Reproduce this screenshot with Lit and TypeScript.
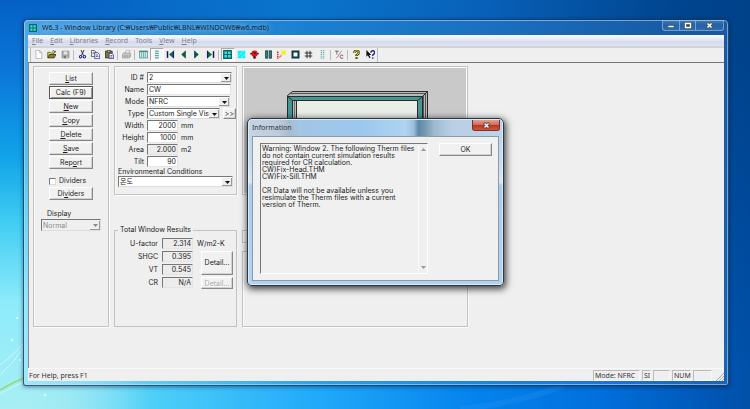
import { LitElement, html, css, svg, nothing } from "lit";
import { customElement } from "lit/decorators.js";
import { classMap } from "lit/directives/class-map.js";

const icons: Record<string, unknown> = {
  new: svg`<path d="M2.5 .5h5l3 3v8h-8z M7.5 .5v3h3" fill="#fdfdfd" stroke="#a9a9a9"/>`,
  open: svg`<path d="M1 10V3h3l1 1h4v2" fill="#e8e27a" stroke="#4a4a10"/><path d="M1 10.5l2-4.5h9l-2.500 4.500z" fill="#8a8420" stroke="#2e2e08"/><path d="M7 1.500q2-1.500 3.500 1M11 1v2H9" fill="none" stroke="#222"/>`,
  save: svg`<path d="M1.500 1.500h9v9h-9z" fill="#a5a5a5" stroke="#8b8b8b"/><path d="M3.500 2h5v4h-5z" fill="#e6e6e6"/><path d="M4 8h4v3H4z" fill="#777"/><path d="M7 8.500h1.500V11H7z" fill="#eee"/>`,
  cut: svg`<path d="M4 0l3.500 7.500M8 0L4.500 7.500" stroke="#222" stroke-width="1.200" fill="none"/><circle cx="3.500" cy="9" r="1.700" fill="none" stroke="#25259a" stroke-width="1.400"/><circle cx="8.500" cy="9" r="1.700" fill="none" stroke="#25259a" stroke-width="1.400"/>`,
  copy: svg`<path d="M.5 .5h4l2 2v6h-6z" fill="#fff" stroke="#333"/><path d="M2 3h3M2 5h3" stroke="#555"/><path d="M5 3.500h4l2.500 2.500v5.500H5z" fill="#fff" stroke="#23238a"/><path d="M6.500 6.500h3M6.500 8.500h3.500" stroke="#23238a"/>`,
  paste: svg`<path d="M.5 1.500h9v9h-9z" fill="#7d7a30" stroke="#222"/><path d="M3 .5h4v2.500H3z" fill="#d7d38a" stroke="#333"/><path d="M5.500 4.500h4l2 2v5h-6z" fill="#fff" stroke="#23238a"/><path d="M7 7.500h3M7 9.500h3" stroke="#23238a"/>`,
  print: svg`<path d="M4 4.500L5.500 .5H11L9 4.500z" fill="#f5f5f5" stroke="#aaa"/><path d="M.5 5.500l2-1.500h8.500l.5 1v3.500l-2 2H.5z" fill="#c9c9c9" stroke="#999"/><path d="M2 8h6M10 7v2" stroke="#8a8a8a"/>`,
  table: svg`<path d="M.5 1.500h11v9H.5z" fill="#d3ecea" stroke="#3f8583"/><path d="M0 2h12" stroke="#3f8583" stroke-width="1.500"/><path d="M3.500 1v9M6 1v9M8.500 1v9" stroke="#56a19d"/>`,
  list: svg`<path d="M4 1.500h5M4 4.500h5M4 7.500h5M4 10.500h5" stroke="#4fa59d" stroke-width="1.500"/>`,
  first: svg`<path d="M2 1.500v9" stroke="#141470" stroke-width="2"/><path d="M10 1v10L4 6z" fill="#0a6a3a"/><path d="M10 1v10" stroke="#1a1a80" stroke-width="1.500"/>`,
  prev: svg`<path d="M8.500 1v10L3 6z" fill="#086030"/><path d="M8.500 1v10" stroke="#1a3a60"/>`,
  next: svg`<path d="M3.500 1v10L9 6z" fill="#086030"/><path d="M3.500 1v10" stroke="#1a1a80"/>`,
  last: svg`<path d="M10 1.500v9" stroke="#141470" stroke-width="2"/><path d="M2 1v10l6-5z" fill="#0a6a3a"/><path d="M2 1v10" stroke="#1a1a80" stroke-width="1.500"/>`,
  panes: svg`<path d="M1 1h10v10H1z" fill="#3fe0dc" stroke="#0a6664" stroke-width="1.800"/><path d="M6 1v10M1 6h10" stroke="#0a6664" stroke-width="1.400"/>`,
  glass: svg`<path d="M1 1h10v10H1z" fill="#12f0f4"/><path d="M1 9l8-8M5 11l6-6" stroke="#8ffcfc"/>`,
  bulb: svg`<circle cx="6" cy="5" r="4.200" fill="#e0151b"/><path d="M0 5h3M9.500 5h2.500" stroke="#111" stroke-width="1.500"/><path d="M5 3h3v2H5z" fill="#681010"/><path d="M4.500 8.500h3v3h-3z" fill="#111"/>`,
  pause: svg`<path d="M2 1h3v10H2zM7 1h3v10H7z" fill="#2d7f7d" stroke="#123c3c"/>`,
  solar: svg`<path d="M1 2v10" stroke="#d22" stroke-width="2" stroke-dasharray="2 1"/><path d="M3 10l3-3" stroke="#e66" stroke-width="1.500"/><circle cx="9" cy="3.500" r="2.800" fill="#fbf500"/><path d="M5 0l7 8M12 0L4 7" stroke="#f7ea30" stroke-width=".8"/>`,
  frame: svg`<path d="M2 2h8v8H2z" fill="#eefafa" stroke="#0c3838" stroke-width="2.600"/>`,
  hash: svg`<path d="M4 1v10M8 1v10M1 4h10M1 8h10" stroke="#222" stroke-width="1.200"/>`,
  shade: svg`<path d="M4.500 0v12M7.500 0v12" stroke="#78b8b4" stroke-width="2" stroke-dasharray="1.500 1"/>`,
  tc: svg`<path d="M0 1.500h5M2.500 1.500V6" stroke="#444" fill="none"/><path d="M2 11L9 1" stroke="#c55"/><path d="M11 7.500q-4-2-4 1.500t4 1.500" stroke="#444" fill="none"/>`,
  help: svg`<path d="M3 4q0-3 3-3t3 2.500q0 1.800-3 3.500v1" fill="none" stroke="#3a3a08" stroke-width="3"/><path d="M3 4q0-3 3-3t3 2.500q0 1.800-3 3.500" fill="none" stroke="#e8e020" stroke-width="1.300"/><path d="M4.500 9.500h3V12h-3z" fill="#55520a"/>`,
  context: svg`<path d="M.5 0v9l2-2 2 4 1.500-1-1.700-3.500H7z" fill="#111"/><path d="M6.500 3.500q0-2.500 2.500-2.500t2.500 2.500q0 1.500-2.500 3v1.500M9 9.500v2" fill="none" stroke="#25259a" stroke-width="1.800"/>`,
};

const toolGroups: string[][] = [
  ["new", "open", "save"],
  ["cut", "copy", "paste"],
  ["print"],
  ["table", "list", "first", "prev", "next", "last"],
  ["panes", "glass", "bulb", "pause", "solar", "frame", "hash", "shade"],
  ["tc"],
  ["help", "context"],
];
const pressed = new Set(["list", "panes"]);

const menus: [string, string, string][] = [
  ["", "F", "ile"],
  ["", "E", "dit"],
  ["", "L", "ibraries"],
  ["", "R", "ecord"],
  ["Tools", "", ""],
  ["", "V", "iew"],
  ["", "H", "elp"],
];

const commands: [string, string, string][] = [
  ["", "L", "ist"],
  ["Calc (F9)", "", ""],
  ["", "N", "ew"],
  ["", "C", "opy"],
  ["", "D", "elete"],
  ["", "S", "ave"],
  ["Rep", "o", "rt"],
];

const message = `Warning: Window 2. The following Therm files
do not contain current simulation results
required for CR calculation.
CW)Fix-Head.THM
CW)Fix-Sill.THM

CR Data will not be available unless you
resimulate the Therm files with a current
version of Therm.`;

const mnemonic = ([a, b, c]: [string, string, string]) =>
  html`${a}${b ? html`<u>${b}</u>` : nothing}${c}`;

@customElement("app-root")
export class AppRoot extends LitElement {
  static styles = css`
    :host {
      --ui: "Noto Sans", "Noto Sans CJK KR", sans-serif;
      --form: "Inter", "Noto Sans CJK KR", sans-serif;
      --face: #efefef;
      display: flex;
      position: relative;
      box-sizing: border-box;
      min-height: 100vh;
      padding: 19px 21px 23px 23px;
      overflow: hidden;
      isolation: isolate;
      font: 7px/10px var(--ui);
      color: #333;
      background: linear-gradient(to right, #a5e8f0 0%, #8ce2f6 9%, #4fd0f8 20%, #22aafa 42%, #0585ee 62%, #006fdc 80%, #0055b2 96%, #0050a8 100%);
    }
    :host::before,
    :host::after {
      content: "";
      position: absolute;
      inset: 0;
      z-index: -2;
    }
    :host::before {
      background: linear-gradient(to right, #0560c4 0%, #0a74cc 40%, #0860b8 65%, #00458f 90%, #00428a 100%);
      mask-image: linear-gradient(#000 10%, transparent 90%);
    }
    :host::after {
      background: linear-gradient(#0560c4 0%, #0a76d8 17%, #10a2e8 38%, #3fcdf2 54%, #8eebfb 74%, #a8eef4 100%);
      mask-image: linear-gradient(to right, #000 3%, transparent 20%);
    }
    * { box-sizing: border-box; }
    button, input, select, textarea {
      margin: 0;
      padding: 0;
      border: 0;
      border-radius: 0;
      font: inherit;
      color: inherit;
      background: none;
      appearance: none;
      outline: none;
      min-width: 0;
    }
    svg { display: block; }
    .leaves { position: absolute; left: 0; bottom: 0; z-index: -1; }

    .window {
      flex: 1;
      min-width: 0;
      display: flex;
      flex-direction: column;
      padding: 0 4px 4px;
      border: 1px solid rgba(20, 45, 75, .75);
      border-radius: 5px 5px 3px 3px;
      background: linear-gradient(to right, rgba(150, 225, 255, .5), rgba(60, 150, 220, .35) 40%, rgba(70, 130, 200, .35));
      box-shadow: inset 0 0 0 1px rgba(190, 230, 255, .55), 0 1px 4px rgba(0, 20, 60, .5);
    }
    .title {
      display: flex;
      height: 15px;
      align-items: center;
      gap: 5px;
      padding-left: 1px;
    }
    .title h1 {
      flex: 1;
      margin: 0;
      font: 7px/12px var(--ui);
      color: #0c2238;
      white-space: nowrap;
      text-shadow: 0 0 5px rgba(170, 220, 250, .9), 0 0 8px rgba(150, 210, 250, .8);
    }
    .caption {
      align-self: flex-start;
      display: flex;
      height: 11px;
      border: 1px solid rgba(170, 200, 230, .6);
      border-top: 0;
      border-radius: 0 0 3px 3px;
    }
    .caption button {
      display: grid;
      place-items: center;
      width: 16px;
      background: linear-gradient(rgba(255, 255, 255, .2), rgba(255, 255, 255, .05) 50%, rgba(255, 255, 255, .1));
    }
    .caption button + button { border-left: 1px solid rgba(170, 200, 230, .6); }
    .caption button:last-child { width: 28px; }

    .client {
      flex: 1;
      display: flex;
      flex-direction: column;
      min-width: 0;
      background: var(--face);
    }
    .menu {
      display: flex;
      gap: 7px;
      height: 13px;
      padding: 1px 4px;
      border-bottom: 2px solid #d3d3d6;
      background: linear-gradient(#fcfcfe, #e4e7f3 45%, #d6dbed 60%, #dfe3f1);
    }
    .menu a {
      color: #808084;
      text-decoration: none;
      white-space: nowrap;
    }
    .toolbar {
      display: flex;
      align-self: flex-start;
      height: 14px;
      margin-left: 2px;
      padding-left: 1px;
      border-left: 1px solid #bbb;
      border-right: 1px solid #bbb;
      padding-bottom: 1px;
    }
    .group { display: grid; grid-auto-flow: column; grid-auto-columns: 1fr; width: 40px; }
    .group + .group { margin-left: 4px; position: relative; }
    .group + .group::before {
      content: "";
      position: absolute;
      left: -3px;
      top: 2px;
      bottom: 1px;
      border-left: 1px solid #bbb;
    }
    .n1 { width: 13px; }
    .n2 { width: 27px; }
    .n6 { width: 80px; }
    .n8 { width: 108px; }
    .tool { display: grid; place-items: center; border: 1px solid transparent; }
    .tool.pressed { border-color: #aaa #fff #fff #aaa; background: #f8f8f8; }

    .workspace {
      flex: 1;
      display: grid;
      grid-template-columns: 76px 123px 226px;
      grid-template-rows: 129px 97px;
      row-gap: 35px;
      column-gap: 5px;
      align-content: start;
      padding: 3px 4px;
      border-top: 1px solid #777;
      border-left: 1px solid #888;
      font-family: var(--form);
      color: #1c1c1c;
    }
    .panel { border: 1px solid #c3c3c3; box-shadow: 1px 1px 0 #fafafa, inset 1px 1px 0 #fafafa; }

    .push {
      height: 13px;
      line-height: 10px;
      border: 1px solid;
      border-color: #fff #888 #888 #fff;
      box-shadow: inset -1px -1px 0 #d2d2d2;
      background: #f1f1f1;
      text-align: center;
      white-space: nowrap;
    }
    .push:disabled { color: #aaa; text-shadow: 1px 1px 0 #fff; }
    .push.default { border-color: #555; box-shadow: inset 1px 1px 0 #fff, inset -1px -1px 0 #999; }

    .side {
      grid-row: span 2;
      display: flex;
      flex-direction: column;
      gap: 1px;
      padding: 5px 15px;
    }
    .check { display: flex; align-items: center; gap: 3px; height: 10px; margin-top: 6px; }
    .check input { width: 7px; height: 7px; border: 1px solid; border-color: #777 #ddd #ddd #777; background: #fff; }
    .caption-label { margin: 8px -2px 0; line-height: 9px; }

    .combo { position: relative; display: block; height: 11px; }
    .combo select {
      display: block;
      width: 100%;
      height: 100%;
      padding: 0 9px 0 1px;
      border: 1px solid;
      border-color: #777 #ddd #ddd #777;
      background: #fff;
      line-height: 9px;
      opacity: 1;
    }
    .combo::after {
      content: "";
      position: absolute;
      top: 2px;
      right: 1px;
      bottom: 1px;
      width: 9px;
      background: #efefef;
      border-right: 1px solid #999;
      border-bottom: 1px solid #999;
    }
    .combo svg { position: absolute; right: 3px; top: 5px; z-index: 1; }
    .combo.off select { background: var(--face); color: #8c8c8c; }
    .combo.display { margin: 0 -8px; height: 12px; }

    .field {
      height: 11px;
      width: 31px;
      padding: 0 1px;
      border: 1px solid;
      border-color: #777 #e4e4e4 #e4e4e4 #777;
      background: #fff;
      text-align: right;
    }
    .field.flat { background: #ececec; }
    .field.wide { width: 84px; text-align: left; }

    .props { padding: 5px 3px 0; }
    .row { display: grid; grid-template-columns: 26px 1fr; column-gap: 3px; align-items: center; height: 11px; margin-bottom: 1px; }
    .row > label { text-align: right; white-space: nowrap; line-height: 11px; }
    .cell { display: flex; gap: 3px; align-items: center; line-height: 11px; }
    .id { width: 85px; }
    .mode { width: 83px; }
    .type { width: 73px; }
    .more { width: 13px; height: 11px; line-height: 8px; }
    .env { display: block; line-height: 8px; white-space: nowrap; }

    .drawing { border: 1px solid #c3c3c3; outline: 1px solid #fafafa; outline-offset: -2px; background: #c9c9c9; overflow: hidden; }

    .results {
      margin: 0;
      min-width: 0;
      padding: 0 4px;
      border: 1px solid #c3c3c3;
      position: relative;
    }
    .results legend { position: absolute; left: 3px; top: -6px; padding: 0 2px; background: var(--face); white-space: nowrap; line-height: 10px; }
    .values { display: grid; grid-template-columns: 39px 31px 1fr; column-gap: 4px; row-gap: 2px; padding-top: 7px; grid-auto-rows: 11px; line-height: 11px; }
    .values label { text-align: right; }
    .detail { grid-row: span 2; width: 32px; height: 24px; margin-left: 4px; line-height: 20px; }
    .detail.off { grid-row: auto; height: 12px; line-height: 9px; }

    .glazing { display: flex; flex-direction: column; gap: 8px; }
    .glazing .panel:first-child { height: 13px; }
    .glazing .panel:last-child { flex: 1; }

    .status { display: flex; gap: 2px; height: 13px; padding: 1px 0 0 1px; border-top: 1px solid #f8f8f8; line-height: 11px; }
    .status span { height: 11px; padding-left: 1px; white-space: nowrap; }
    .status .help { flex: 1; padding-left: 0; }
    .pane { border: 1px solid; border-color: #bbb #f8f8f8 #f8f8f8 #bbb; line-height: 10px; }
    .p-mode { width: 47px; }
    .p-si { width: 9px; }
    .p-blank { width: 17px; }
    .p-num { width: 19px; }
    .p-last { width: 19px; }
    .grip { align-self: flex-end; margin-left: 2px; }

    .dialog {
      position: absolute;
      left: 247px;
      top: 118px;
      width: 257px;
      height: 168px;
      display: flex;
      flex-direction: column;
      padding: 0 4px 4px;
      border: 1px solid #2c3742;
      border-radius: 5px 5px 4px 4px;
      background: linear-gradient(#b4d3ef 0, #c3daf0 25%, #d8e8f6 38%, #a9cdee 40%, #b2d2f0 100%);
      box-shadow: inset 0 0 0 1px rgba(255, 255, 255, .5), 1px 2px 7px 1px rgba(0, 0, 0, .75);
    }
    .bar {
      display: flex;
      justify-content: space-between;
      height: 16px;
      margin: 1px -3px 0;
      padding: 0 2px 0 3px;
      border-radius: 4px 4px 0 0;
      background: linear-gradient(to right, #c6d4e2 0, #bccada 12%, #a9bccd 16%, #a3c5e4 20%, #9cc8ee 45%, #b0d4f0 62%, #9cc0dc 65%, #5b8aa6 67%, #6d94ac 69%, #9cb8cf 73%, #b9cfe4 80%, #bdd3e8 100%);
    }
    .bar h2 { margin: 0; font: 7px/16px var(--ui); color: #2b3440; }
    .close {
      display: grid;
      place-items: center;
      width: 28px;
      height: 11px;
      border: 1px solid #7a3030;
      border-top: 0;
      border-radius: 0 0 3px 3px;
      background: linear-gradient(#e0a296, #cf6a58 48%, #bb3520 52%, #d0583c);
    }
    .body {
      flex: 1;
      display: flex;
      gap: 11px;
      padding: 6px 6px 6px 7px;
      border: 1px solid #8c9aa8;
      background: #f0f0f0;
      font-family: var(--form);
      color: #1c1c1c;
    }
    .scroll { flex: 1; display: flex; border: 1px solid; border-color: #777 #fff #fff #777; }
    .scroll textarea { flex: 1; padding: 1px 0 1px 1px; resize: none; overflow: hidden; line-height: 7px; white-space: pre; }
    .track { display: flex; flex-direction: column; justify-content: space-between; align-items: center; width: 9px; padding: 4px 0; border-left: 1px solid #fafafa; }
    .ok { width: 53px; }
  `;

  private combo(id: string, value: string, extra = "", disabled = false) {
    return html`<span class="combo ${extra}">
      <select id=${id} ?disabled=${disabled}><option>${value}</option></select>
      <svg width="5" height="3" viewBox="0 0 5 3" aria-hidden="true"><path d="M0 0h5L2.500 3z" fill=${disabled ? "#888" : "#111"} /></svg>
    </span>`;
  }

  private number(id: string, label: string, value: string, unit: string, readonly = false) {
    return html`<div class="row">
      <label for=${id}>${label}</label>
      <div class="cell">
        <input id=${id} class=${classMap({ field: true, flat: readonly })} .value=${value} ?readonly=${readonly} />${unit}
      </div>
    </div>`;
  }

  private cross(stroke: string) {
    return html`<svg width="7" height="7" viewBox="0 0 7 7"><path d="M1 1l5 5M6 1l-5 5" stroke=${stroke} stroke-width="2.800" /><path d="M1.500 1.500l4 4M5.500 1.500l-4 4" stroke="#fff" stroke-width="1.500" /></svg>`;
  }

  render() {
    return html`
      <svg class="leaves" width="600" height="110" viewBox="0 0 600 110" fill="none" aria-hidden="true">
        <path d="M0 66Q14 56 24 44M0 76Q14 64 24 48M0 95Q12 88 24 83" stroke="#d8fafa" stroke-opacity=".8" />
        <path d="M0 91Q14 83 24 79" stroke="#8fdc6c" stroke-width="1.500" />
        <path d="M460 110Q520 104 565 86" stroke="#4aa8ff" stroke-opacity=".15" stroke-width="6" />
        <g fill="#e8ffff"><circle cx="17" cy="19" r="1" /><circle cx="12" cy="41" r="1" /><circle cx="20" cy="61" r="1" /><circle cx="45" cy="96" r="1" /></g>
      </svg>

      <main class="window">
        <header class="title">
          <svg width="8" height="8" viewBox="0 0 12 12">${icons.panes}</svg>
          <h1>W6.3 - Window Library (C:₩Users₩Public₩LBNL₩WINDOW6₩w6.mdb)</h1>
          <div class="caption">
            <button aria-label="Minimize"><svg width="8" height="7" viewBox="0 0 8 7"><path d="M1 3.500h6v2H1z" fill="#fff" stroke="#455" stroke-width=".6" /></svg></button>
            <button aria-label="Maximize"><svg width="8" height="7" viewBox="0 0 8 7"><path d="M1.500 1.500h5v4h-5z" fill="none" stroke="#455" stroke-width="2.400" /><path d="M1.500 1.500h5v4h-5z" fill="#345" stroke="#fff" stroke-width="1.300" /></svg></button>
            <button aria-label="Close">${this.cross("#455")}</button>
          </div>
        </header>

        <div class="client">
          <nav class="menu">${menus.map((m) => html`<a href="#">${mnemonic(m)}</a>`)}</nav>
          <div class="toolbar" role="toolbar">
            ${toolGroups.map(
              (g) => html`<div class="group n${g.length}">
                ${g.map(
                  (n) => html`<button class=${classMap({ tool: true, pressed: pressed.has(n) })} aria-label=${n}>
                    <svg width="9" height="9" viewBox="0 0 12 12" fill="none">${icons[n]}</svg>
                  </button>`,
                )}
              </div>`,
            )}
          </div>

          <div class="workspace">
            <section class="panel side">
              ${commands.map((c, i) => html`<button class=${classMap({ push: true, default: i === 1 })}>${mnemonic(c)}</button>`)}
              <label class="check"><input type="checkbox" />Dividers</label>
              <button class="push">Di<u>v</u>iders</button>
              <label class="caption-label" for="display">Display</label>
              ${this.combo("display", "Normal", "off display", true)}
            </section>

            <section class="panel props">
              <div class="row"><label for="wid">ID #</label><div class="cell">${this.combo("wid", "2", "id")}</div></div>
              <div class="row"><label for="name">Name</label><div class="cell"><input id="name" class="field wide" .value=${"CW"} /></div></div>
              <div class="row"><label for="mode">Mode</label><div class="cell">${this.combo("mode", "NFRC", "mode")}</div></div>
              <div class="row">
                <label for="type">Type</label>
                <div class="cell">${this.combo("type", "Custom Single Vis", "type")}<button class="push more">&gt;&gt;</button></div>
              </div>
              ${this.number("width", "Width", "2000", "mm")}
              ${this.number("height", "Height", "1000", "mm")}
              ${this.number("area", "Area", "2.000", "m2", true)}
              ${this.number("tilt", "Tilt", "90", "")}
              <label class="env" for="env">Environmental Conditions</label>
              ${this.combo("env", "온도")}
            </section>

            <section class="drawing">
              <svg width="224" height="127" viewBox="0 0 224 127" fill="none" stroke="#2a2a2a">
                <path d="M44.500 28.500L49.500 24.500H184.500V127H44.500z" fill="#b9b9b9" />
                <path d="M47 26.500H182.500V127M180.500 28V127" stroke="#555" />
                <path d="M44.500 29.500H179.500V127H44.500z" fill="#459593" />
                <path d="M49.500 33.500H174.500V127H49.500z" fill="#b9b9b9" />
                <path d="M51.500 34V127" stroke="#777" />
                <path d="M53.500 33.500H174.500V127H53.500z" fill="#e8ede6" />
                <path d="M44.500 29.500l5 4M179.500 29.500l-5 4M179.500 29.500l5-5" />
              </svg>
            </section>

            <fieldset class="results">
              <legend>Total Window Results</legend>
              <div class="values">
                <label for="u">U-factor</label><input id="u" class="field flat" readonly .value=${"2.314"} /><span>W/m2-K</span>
                <label for="shgc">SHGC</label><input id="shgc" class="field flat" readonly .value=${"0.395"} /><button class="push detail">Detail...</button>
                <label for="vt">VT</label><input id="vt" class="field flat" readonly .value=${"0.545"} />
                <label for="cr">CR</label><input id="cr" class="field flat" readonly .value=${"N/A"} /><button class="push detail off" disabled>Detail...</button>
              </div>
            </fieldset>

            <section class="glazing"><div class="panel"></div><div class="panel"></div></section>
          </div>

          <footer class="status">
            <span class="help">For Help, press F1</span>
            <span class="pane p-mode">Mode: NFRC</span>
            <span class="pane p-si">SI</span>
            <span class="pane p-blank"></span>
            <span class="pane p-num">NUM</span>
            <span class="pane p-last"></span>
            <svg class="grip" width="8" height="8" viewBox="0 0 8 8" stroke="#aaa"><path d="M0 8l8-8M3 8l5-5M6 8l2-2" /></svg>
          </footer>
        </div>
      </main>

      <section class="dialog" role="dialog" aria-labelledby="dlg">
        <header class="bar"><h2 id="dlg">Information</h2><button class="close" aria-label="Close">${this.cross("#533")}</button></header>
        <div class="body">
          <div class="scroll">
            <textarea readonly aria-label="Message" .value=${message}></textarea>
            <div class="track">
              <svg width="5" height="3" viewBox="0 0 5 3"><path d="M0 3h5L2.500 0z" fill="#999" /></svg>
              <svg width="5" height="3" viewBox="0 0 5 3"><path d="M0 0h5L2.500 3z" fill="#999" /></svg>
            </div>
          </div>
          <button class="push ok">OK</button>
        </div>
      </section>
    `;
  }
}
